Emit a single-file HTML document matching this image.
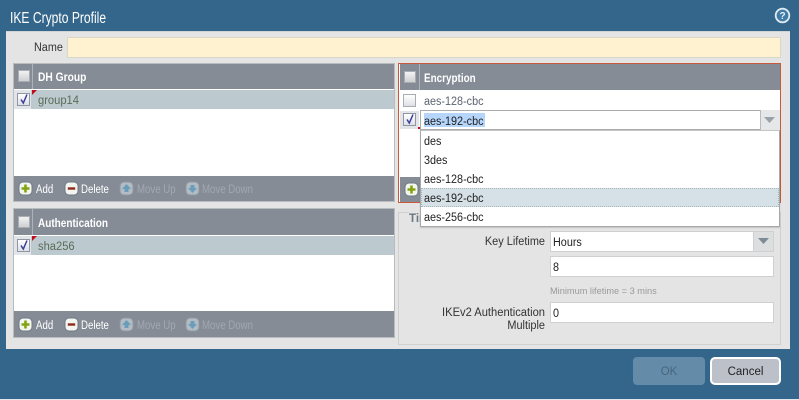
<!DOCTYPE html>
<html><head><meta charset="utf-8">
<style>
html,body{margin:0;padding:0}
body{width:799px;height:400px;position:relative;overflow:hidden;background:#33668a;font-family:"Liberation Sans",sans-serif;font-size:11.5px;color:#333;filter:blur(.3px)}
div,span.a,svg{position:absolute;box-sizing:border-box}
.t{white-space:nowrap;line-height:14px;margin-top:1px;transform-origin:0 50%;transform:scaleX(.94)}
.r{white-space:nowrap;line-height:14px;margin-top:1px;text-align:right;transform-origin:100% 50%;transform:scaleX(.95)}
.hd{background:#858c96}
.ft{background:#858c96}
.w{color:#fff;font-weight:bold}
.cb{width:13px;height:13px;background:linear-gradient(#fff,#dfe0e4);border:1px solid #8f95a3}
.cbh{width:12px;height:12px;background:linear-gradient(#f2f2f2,#cfd0d3);border:1px solid #a9adb3}
.inp{background:#fff;border:1px solid #cfd0cf}
.btx{color:#fff;font-size:11.5px;white-space:nowrap;line-height:14px;margin-top:1px;transform-origin:0 50%;transform:scaleX(.84)}
.dis{color:#a1a8b1}
</style></head><body>

<div class="t" style="left:10px;top:9px;color:#fff;font-size:15.5px;line-height:17px;transform:scaleX(.78)">IKE Crypto Profile</div>
<svg style="left:774px;top:7px" width="17" height="17" viewBox="0 0 17 17"><circle cx="8.5" cy="8.5" r="6.8" fill="#3f7ca6" stroke="#dfeaf2" stroke-width="1.8"/><text x="8.5" y="12" text-anchor="middle" font-family="Liberation Sans" font-size="10" font-weight="bold" fill="#e8f0f6">?</text></svg>

<div style="left:6px;top:31px;width:784px;height:318px;background:#e4e4e4;border-top:1px solid #d0d4d6"></div>

<div class="t" style="left:34px;top:40px;color:#333">Name</div>
<div style="left:67px;top:37px;width:714px;height:21px;background:#fff2d0;border:1px solid #d9d7c8"></div>

<!-- DH group -->
<div style="left:13px;top:63px;width:382px;height:139px;background:#fff;border:1px solid #b9bcbf"></div>
<div class="hd" style="left:14px;top:64px;width:380px;height:25px"></div>
<div style="left:32px;top:64px;width:1px;height:25px;background:#aeb3ba"></div>
<div class="cbh" style="left:18px;top:70px"></div>
<div class="t w" style="left:38px;top:70px;font-size:11.5px;transform:scaleX(.89)">DH Group</div>
<div style="left:14px;top:90px;width:380px;height:19px;background:#bccacf"></div>
<div style="left:14px;top:90px;width:17px;height:19px;background:#e2e5e7"></div>
<div class="cb" style="left:17px;top:93px"></div>
<svg style="left:17px;top:92px" width="14" height="14" viewBox="0 0 14 14"><path d="M4 7.5 L6.3 11 L10 2.5" fill="none" stroke="#3a3f9c" stroke-width="1.5"/></svg>
<svg style="left:32px;top:90px" width="5" height="5"><path d="M0 0H5L0 5Z" fill="#c00d20"/></svg>
<div class="t" style="left:38px;top:93px;color:#5c6b58;transform:scaleX(.97)">group14</div>
<div class="ft" style="left:14px;top:176px;width:380px;height:25px"></div>

<!-- Auth -->
<div style="left:13px;top:208px;width:382px;height:130px;background:#fff;border:1px solid #b9bcbf"></div>
<div class="hd" style="left:14px;top:209px;width:380px;height:26px"></div>
<div style="left:32px;top:209px;width:1px;height:26px;background:#aeb3ba"></div>
<div class="cbh" style="left:18px;top:216px"></div>
<div class="t w" style="left:38px;top:216px;font-size:11.5px;transform:scaleX(.87)">Authentication</div>
<div style="left:14px;top:236px;width:380px;height:19px;background:#bccacf"></div>
<div style="left:14px;top:236px;width:17px;height:19px;background:#e2e5e7"></div>
<div class="cb" style="left:17px;top:239px"></div>
<svg style="left:17px;top:238px" width="14" height="14" viewBox="0 0 14 14"><path d="M4 7.5 L6.3 11 L10 2.5" fill="none" stroke="#3a3f9c" stroke-width="1.5"/></svg>
<svg style="left:32px;top:236px" width="5" height="5"><path d="M0 0H5L0 5Z" fill="#c00d20"/></svg>
<div class="t" style="left:38px;top:239px;color:#5c6b58;transform:scaleX(.97)">sha256</div>
<div class="ft" style="left:14px;top:311px;width:380px;height:26px"></div>

<!-- toolbar DH -->
<svg style="left:18px;top:181px" width="16" height="15" viewBox="0 0 16 15"><rect x="1" y="1" width="13" height="13" rx="4" fill="#f4f5ef" stroke="#6d7a88"/><path d="M7.5 3.5V11.5M3.5 7.5H11.5" stroke="#84a312" stroke-width="2.6"/></svg>
<div class="btx" style="left:36px;top:182px">Add</div>
<svg style="left:64px;top:181px" width="16" height="15" viewBox="0 0 16 15"><rect x="1" y="1" width="13" height="13" rx="4" fill="#f4f5ef" stroke="#6d7a88"/><path d="M3.8 7.5H11.2" stroke="#8e2a1a" stroke-width="2.4"/></svg>
<div class="btx" style="left:81px;top:182px">Delete</div>
<svg style="left:119px;top:181px" width="16" height="15" viewBox="0 0 16 15"><rect x="1" y="1" width="13" height="13" rx="4" fill="#b4bcc3" stroke="#8d97a2"/><path d="M7.5 3L12 8H9.5V11H5.5V8H3Z" fill="#6a9cbc"/></svg>
<div class="btx dis" style="left:137px;top:182px">Move Up</div>
<svg style="left:185px;top:181px" width="16" height="15" viewBox="0 0 16 15"><rect x="1" y="1" width="13" height="13" rx="4" fill="#b4bcc3" stroke="#8d97a2"/><path d="M7.5 12L12 7H9.5V4H5.5V7H3Z" fill="#6a9cbc"/></svg>
<div class="btx dis" style="left:202px;top:182px">Move Down</div>

<!-- toolbar Auth -->
<svg style="left:18px;top:317px" width="16" height="15" viewBox="0 0 16 15"><rect x="1" y="1" width="13" height="13" rx="4" fill="#f4f5ef" stroke="#6d7a88"/><path d="M7.5 3.5V11.5M3.5 7.5H11.5" stroke="#84a312" stroke-width="2.6"/></svg>
<div class="btx" style="left:36px;top:318px">Add</div>
<svg style="left:64px;top:317px" width="16" height="15" viewBox="0 0 16 15"><rect x="1" y="1" width="13" height="13" rx="4" fill="#f4f5ef" stroke="#6d7a88"/><path d="M3.8 7.5H11.2" stroke="#8e2a1a" stroke-width="2.4"/></svg>
<div class="btx" style="left:81px;top:318px">Delete</div>
<svg style="left:119px;top:317px" width="16" height="15" viewBox="0 0 16 15"><rect x="1" y="1" width="13" height="13" rx="4" fill="#b4bcc3" stroke="#8d97a2"/><path d="M7.5 3L12 8H9.5V11H5.5V8H3Z" fill="#6a9cbc"/></svg>
<div class="btx dis" style="left:137px;top:318px">Move Up</div>
<svg style="left:185px;top:317px" width="16" height="15" viewBox="0 0 16 15"><rect x="1" y="1" width="13" height="13" rx="4" fill="#b4bcc3" stroke="#8d97a2"/><path d="M7.5 12L12 7H9.5V4H5.5V7H3Z" fill="#6a9cbc"/></svg>
<div class="btx dis" style="left:202px;top:318px">Move Down</div>

<!-- Timers fieldset -->
<div style="left:398px;top:212px;width:383px;height:133px;border:1px solid #d0d0d0"></div>
<div class="w" style="left:409px;top:212px;width:12px;overflow:hidden;color:#6d7680;font-size:11.5px;line-height:14px;background:#e4e4e4;white-space:nowrap">Timers</div>

<div class="r" style="left:445px;top:234px;width:100px;color:#333">Key Lifetime</div>
<div class="inp" style="left:550px;top:231px;width:204px;height:21px"></div>
<div style="left:753px;top:231px;width:21px;height:21px;background:#dcdee0;border:1px solid #cfd0cf"></div>
<svg style="left:758px;top:238px" width="12" height="7"><path d="M0 0H11L5.5 6Z" fill="#7d8b97"/></svg>
<div class="t" style="left:553px;top:235px;color:#222">Hours</div>
<div class="inp" style="left:550px;top:256px;width:224px;height:21px"></div>
<div class="t" style="left:553px;top:260px;color:#222">8</div>
<div class="t" style="left:550px;top:284px;color:#9a9a9a;font-size:9.5px;transform:scaleX(.97)">Minimum lifetime = 3 mins</div>
<div class="r" style="left:405px;top:305px;width:140px;color:#333;transform:scaleX(.97)">IKEv2 Authentication</div>
<div class="r" style="left:445px;top:318px;width:100px;color:#333">Multiple</div>
<div class="inp" style="left:550px;top:302px;width:224px;height:21px"></div>
<div class="t" style="left:553px;top:306px;color:#222">0</div>

<!-- Encryption -->
<div style="left:398px;top:63px;width:383px;height:140px;background:#fff;border:1px solid #c8593a"></div>
<div class="hd" style="left:400px;top:64px;width:380px;height:26px"></div>
<div style="left:419px;top:64px;width:1px;height:26px;background:#aeb3ba"></div>
<div class="cbh" style="left:404px;top:71px"></div>
<div class="t w" style="left:424px;top:71px;font-size:11.5px;transform:scaleX(.86)">Encryption</div>
<div class="cb" style="left:403px;top:94px;border-color:#a9adb3"></div>
<div class="t" style="left:424px;top:94px;color:#5a6470">aes-128-cbc</div>
<div style="left:400px;top:111px;width:19px;height:18px;background:#e2e5e7"></div>
<div class="cb" style="left:403px;top:113px"></div>
<svg style="left:403px;top:112px" width="14" height="14" viewBox="0 0 14 14"><path d="M4 7.5 L6.3 11 L10 2.5" fill="none" stroke="#3a3f9c" stroke-width="1.5"/></svg>
<div class="ft" style="left:400px;top:177px;width:380px;height:25px"></div>
<svg style="left:404px;top:182px" width="16" height="15" viewBox="0 0 16 15"><rect x="1" y="1" width="13" height="13" rx="4" fill="#f4f5ef" stroke="#6d7a88"/><path d="M7.5 3.5V11.5M3.5 7.5H11.5" stroke="#84a312" stroke-width="2.6"/></svg>

<div style="left:420px;top:110px;width:341px;height:20px;background:#fff;border:1px solid #a9abad"></div>
<div style="left:760px;top:110px;width:20px;height:20px;background:#e6e7e8;border-left:1px solid #b9bcbf"></div>
<svg style="left:764px;top:117px" width="12" height="7"><path d="M0 0H11L5.5 6Z" fill="#9aa1a8"/></svg>
<div style="left:424px;top:113px;width:61px;height:14px;background:#b5d5fb"></div>
<div class="t" style="left:424px;top:114px;color:#222">aes-192-cbc</div>

<!-- dropdown -->
<div style="left:420px;top:130px;width:360px;height:97px;background:#fff;border:1px solid #a8a8a8;border-top-color:#c4c4c4;box-shadow:0 1px 1px rgba(0,0,0,.15)"></div>
<div style="left:421px;top:188px;width:358px;height:19px;background:#d6e0e7;border:1px dotted #a9b5bd"></div>
<div class="t" style="left:424px;top:134px;color:#222">des</div>
<div class="t" style="left:424px;top:153px;color:#222">3des</div>
<div class="t" style="left:424px;top:172px;color:#222">aes-128-cbc</div>
<div class="t" style="left:424px;top:191px;color:#222">aes-192-cbc</div>
<div class="t" style="left:424px;top:210px;color:#222">aes-256-cbc</div>
<svg style="left:418px;top:127px" width="3" height="3"><rect width="2" height="2" fill="#c00d20"/></svg>

<!-- Buttons -->
<div style="left:633px;top:357px;width:72px;height:28px;background:#648ba8;border-radius:4px"></div>
<div style="left:633px;top:365px;width:72px;text-align:center;color:#46677f;font-size:11.5px;line-height:14px">OK</div>
<div style="left:710px;top:357px;width:71px;height:28px;background:#bcc0c9;border:2px solid #fff;border-radius:5px"></div>
<div style="left:710px;top:365px;width:71px;text-align:center;color:#222;font-size:11.5px;line-height:14px">Cancel</div>

<div style="left:0;top:399px;width:799px;height:1px;background:#dfe6ec"></div>
</body></html>
